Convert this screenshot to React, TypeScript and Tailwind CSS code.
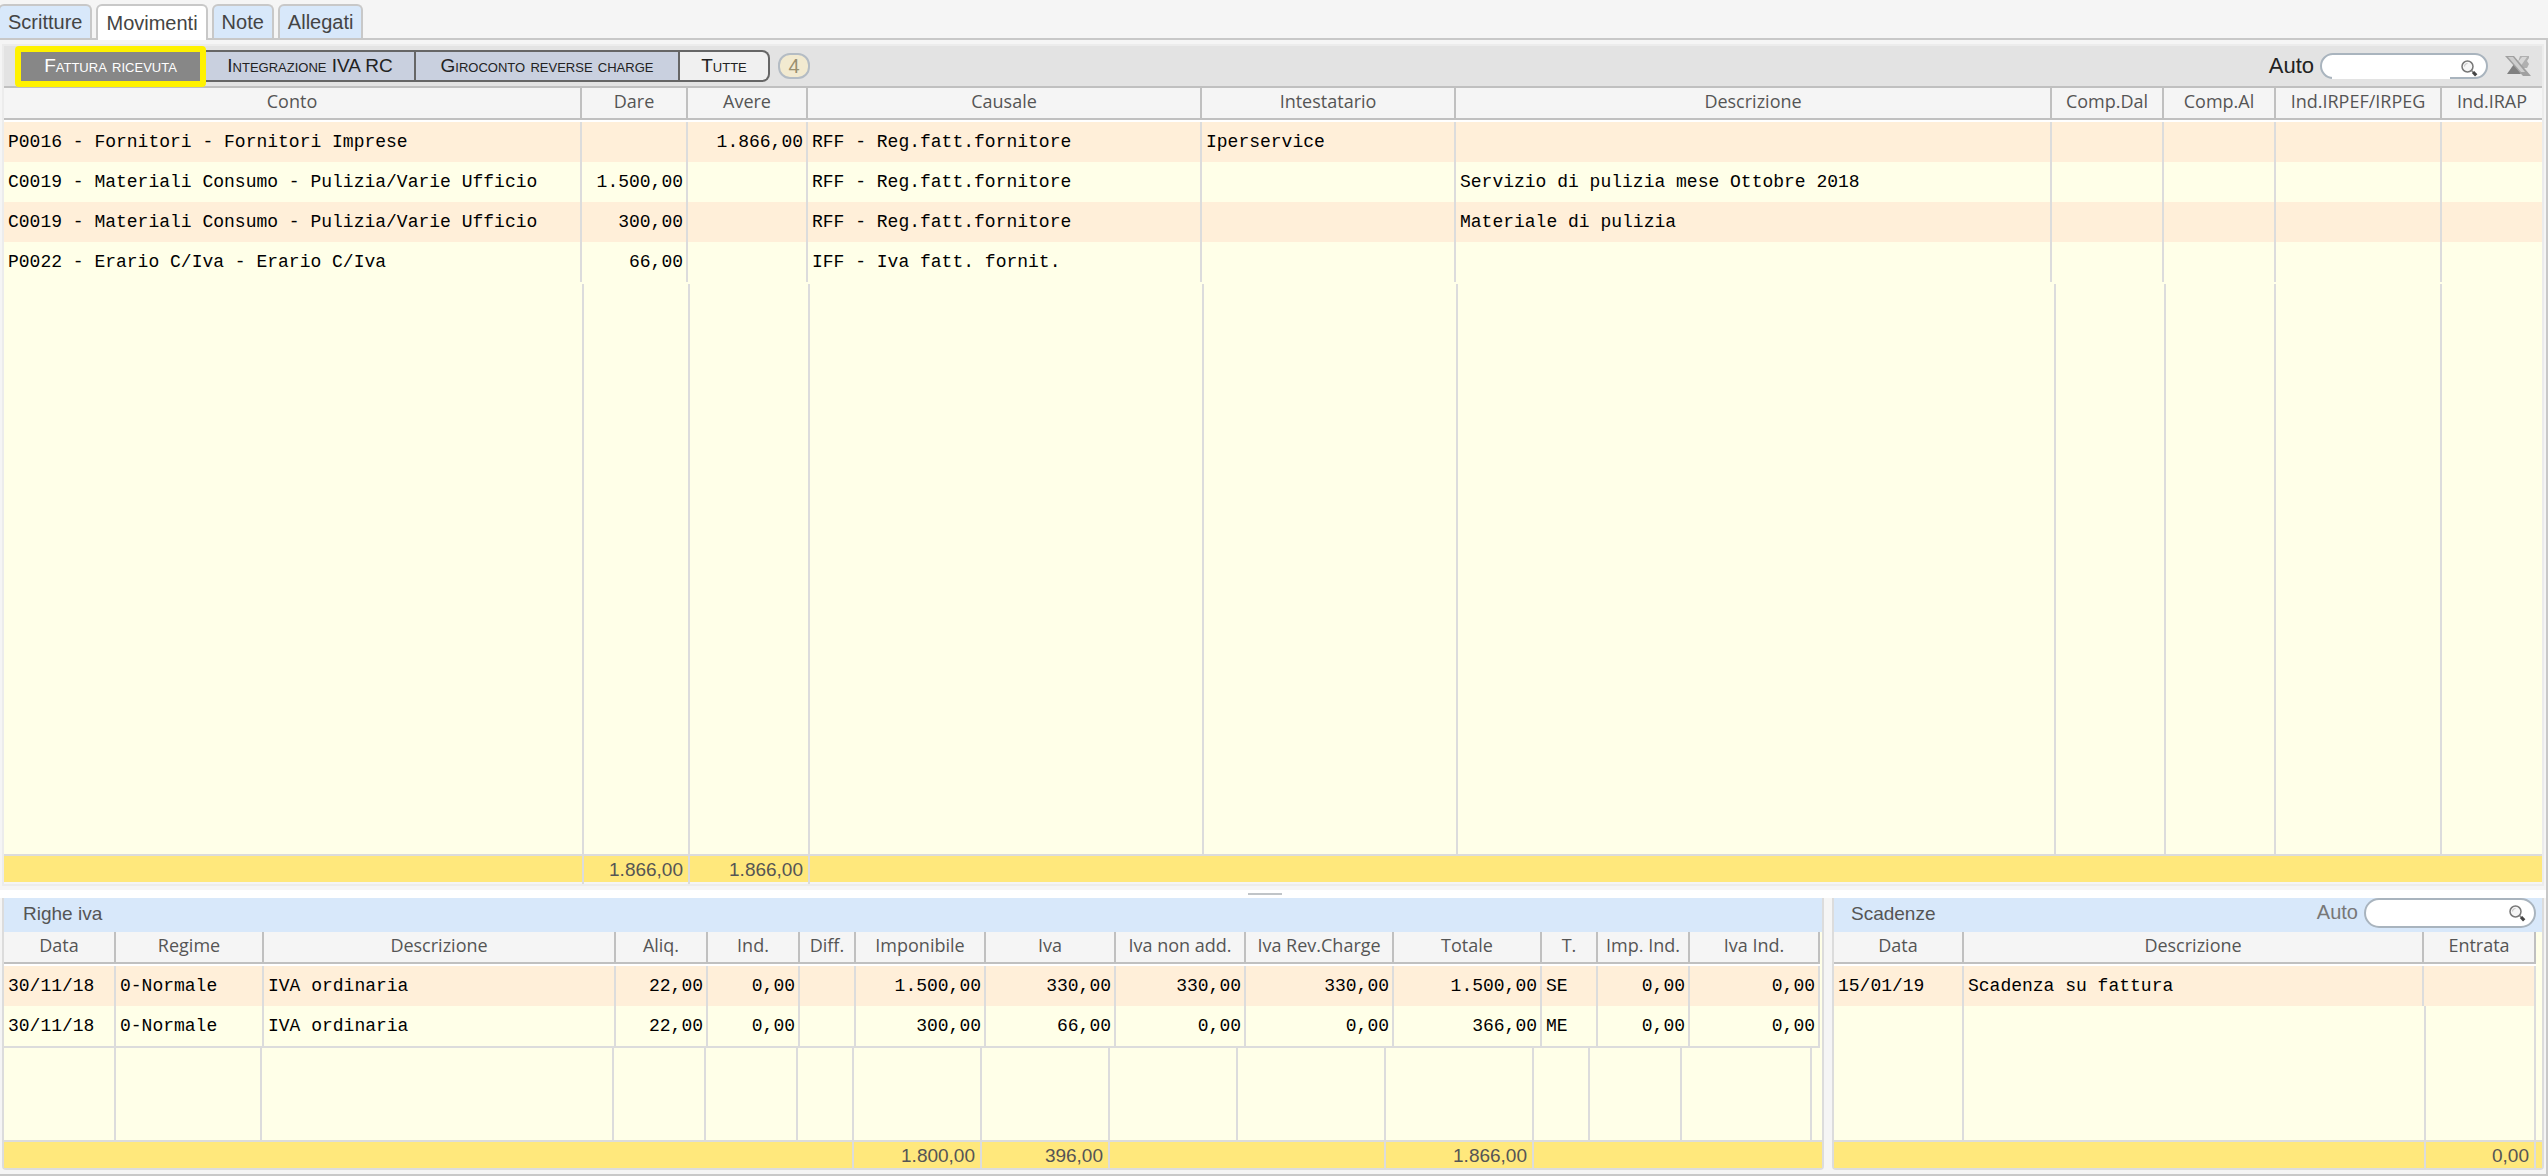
import React, { useState } from "react";
import { clsx } from "clsx";

type Align = "left" | "right";

interface Column {
  label: string;
  // undefined width = takes the remaining space
  width?: number;
  fillWidth?: number;
  align?: Align;
  total?: string;
}

const MOVIMENTI_COLUMNS: Column[] = [
  { label: "Conto", width: 578, fillWidth: 580 },
  { label: "Dare", width: 106, align: "right", total: "1.866,00" },
  { label: "Avere", width: 120, align: "right", total: "1.866,00" },
  { label: "Causale", width: 394 },
  { label: "Intestatario", width: 254 },
  { label: "Descrizione" },
  { label: "Comp.Dal", width: 112, fillWidth: 110 },
  { label: "Comp.Al", width: 112, fillWidth: 110 },
  { label: "Ind.IRPEF/IRPEG", width: 166 },
  { label: "Ind.IRAP", width: 100 },
];

const MOVIMENTI_ROWS = [
  ["P0016 - Fornitori - Fornitori Imprese", "", "1.866,00", "RFF - Reg.fatt.fornitore", "Iperservice", "", "", "", "", ""],
  ["C0019 - Materiali Consumo - Pulizia/Varie Ufficio", "1.500,00", "", "RFF - Reg.fatt.fornitore", "", "Servizio di pulizia mese Ottobre 2018", "", "", "", ""],
  ["C0019 - Materiali Consumo - Pulizia/Varie Ufficio", "300,00", "", "RFF - Reg.fatt.fornitore", "", "Materiale di pulizia", "", "", "", ""],
  ["P0022 - Erario C/Iva - Erario C/Iva", "66,00", "", "IFF - Iva fatt. fornit.", "", "", "", "", "", ""],
];

const IVA_COLUMNS: Column[] = [
  { label: "Data", width: 112 },
  { label: "Regime", width: 148, fillWidth: 146 },
  { label: "Descrizione" },
  { label: "Aliq.", width: 92, align: "right" },
  { label: "Ind.", width: 92, align: "right" },
  { label: "Diff.", width: 56 },
  { label: "Imponibile", width: 130, fillWidth: 128, align: "right", total: "1.800,00" },
  { label: "Iva", width: 130, fillWidth: 128, align: "right", total: "396,00" },
  { label: "Iva non add.", width: 130, fillWidth: 128, align: "right" },
  { label: "Iva Rev.Charge", width: 148, align: "right" },
  { label: "Totale", width: 148, align: "right", total: "1.866,00" },
  { label: "T.", width: 56 },
  { label: "Imp. Ind.", width: 92, align: "right" },
  { label: "Iva Ind.", width: 130, align: "right" },
];

const IVA_ROWS = [
  ["30/11/18", "0-Normale", "IVA ordinaria", "22,00", "0,00", "", "1.500,00", "330,00", "330,00", "330,00", "1.500,00", "SE", "0,00", "0,00"],
  ["30/11/18", "0-Normale", "IVA ordinaria", "22,00", "0,00", "", "300,00", "66,00", "0,00", "0,00", "366,00", "ME", "0,00", "0,00"],
];

const SCADENZE_COLUMNS: Column[] = [
  { label: "Data", width: 130 },
  { label: "Descrizione" },
  { label: "Entrata", width: 112, fillWidth: 110, align: "right", total: "0,00" },
];

const SCADENZE_ROWS = [["15/01/19", "Scadenza su fattura", ""]];

const TABS = ["Scritture", "Movimenti", "Note", "Allegati"];

interface DataGridProps {
  columns: Column[];
  rows: string[][];
  // space left at the right of the last column
  endClass?: string;
  fillEndClass?: string;
  closeRows?: boolean;
  gapAfterRows?: boolean;
  lastBorder?: boolean;
}

function DataGrid({
  columns,
  rows,
  endClass,
  fillEndClass,
  closeRows,
  gapAfterRows,
  lastBorder,
}: DataGridProps) {
  const hasBorder = (index: number) => lastBorder || index < columns.length - 1;
  const hasTotalBorder = (index: number) =>
    Boolean(columns[index].total || columns[index + 1]?.total);
  const template = columns
    .map((c) => (c.width ? `${c.fillWidth ?? c.width}px` : "minmax(0,1fr)"))
    .join(" ");

  return (
    <div className="flex flex-1 flex-col bg-[#ffffe8]">
      <div className={endClass}>
        <table className="w-full table-fixed border-separate border-spacing-0">
          <colgroup>
            {columns.map((c, i) => (
              <col key={i} style={{ width: c.width }} />
            ))}
          </colgroup>
          <thead className="bg-[#f5f5f5] font-['Open_Sans','Noto_Sans',sans-serif] text-[18px] leading-6">
            <tr>
              {columns.map((c, i) => (
                <th
                  key={i}
                  scope="col"
                  className={clsx(
                    "h-8 overflow-hidden border-b-2 border-[#c0c0c0] p-0 pb-1 text-center font-normal whitespace-nowrap text-[#555]",
                    hasBorder(i) && "border-r-2"
                  )}
                >
                  {c.label}
                </th>
              ))}
            </tr>
          </thead>
          <tbody className="font-['Liberation_Mono','Courier_New',monospace] text-[18px] leading-6 text-black">
            <tr aria-hidden="true">
              <td colSpan={columns.length} className="h-0.5 bg-white p-0" />
            </tr>
            {rows.map((row, r) => (
              <tr key={r} className={r % 2 === 0 ? "bg-[#ffefd9]" : "bg-[#ffffe8]"}>
                {row.map((value, i) => (
                  <td
                    key={i}
                    className={clsx(
                      "h-10 overflow-hidden py-0 whitespace-nowrap",
                      columns[i].align === "right" ? "pr-[3px] text-right" : "pl-1",
                      hasBorder(i) && "border-r-2 border-[#dcdcdc]"
                    )}
                  >
                    {value}
                  </td>
                ))}
              </tr>
            ))}
          </tbody>
        </table>
        {closeRows && <div className="h-0.5 bg-[#dcdcdc]" />}
      </div>

      {/* Empty area under the rows */}
      <div
        className={clsx("grid flex-1", fillEndClass, gapAfterRows && "mt-0.5")}
        style={{ gridTemplateColumns: template }}
      >
        {columns.map((_, i) => (
          <div key={i} className={clsx(hasBorder(i) && "border-r-2 border-[#dcdcdc]")} />
        ))}
      </div>

      {/* Totals */}
      <div className="border-t-2 border-[#dcdcdc] bg-[#ffe87c]">
        <div
          className={clsx("grid h-[26px]", fillEndClass)}
          style={{ gridTemplateColumns: template }}
        >
          {columns.map((c, i) => (
            <div
              key={i}
              className={clsx(
                "pr-[5px] text-right text-[19px] leading-7 text-[#555]",
                hasTotalBorder(i) && "border-r-2 border-[#dcdcdc]"
              )}
            >
              {c.total}
            </div>
          ))}
        </div>
      </div>
    </div>
  );
}

function MagnifierIcon() {
  return (
    <svg viewBox="0 0 18 18" className="h-[18px] w-[18px]" aria-hidden="true">
      <circle cx="7.5" cy="7.5" r="5.5" fill="#f6f6f6" stroke="#777" strokeWidth="1.5" />
      <path d="M4.5 7.5a3 3 0 0 1 3-3" fill="none" stroke="#c8c8c8" strokeWidth="1.2" />
      <path d="M11.5 11.5l1.5 1.5" stroke="#888" strokeWidth="1.6" />
      <path d="M13 13l3.2 3.4" stroke="#444" strokeWidth="3.2" />
    </svg>
  );
}

function SpreadsheetIcon() {
  return (
    <svg viewBox="0 0 28 22" className="h-[22px] w-7" aria-hidden="true">
      <path d="M16 1h9v2l-2 3 2 3-2 4h-5l-4-6z" fill="#b0b0b0" />
      <path d="M18 2h5l-7 10-3-4z" fill="#d6d6d6" />
      <path d="M3 19l7-10 7 10z" fill="#808080" />
      <path d="M1 1h9l17 20h-8z" fill="#a0a0a0" />
      <path d="M4 2h5l12 15h-4z" fill="#cecece" />
    </svg>
  );
}

export default function App() {
  const [activeTab, setActiveTab] = useState("Movimenti");
  const [filter, setFilter] = useState("Fattura ricevuta");

  return (
    <div className="flex min-h-screen flex-col bg-[#f5f5f5] font-['Liberation_Sans',Arial,sans-serif]">
      {/* Tabs */}
      <nav className="-ml-0.5 flex gap-1 border-b-2 border-[#c8c8c8] pt-1">
        {TABS.map((tab) => (
          <button
            key={tab}
            type="button"
            onClick={() => setActiveTab(tab)}
            className={clsx(
              "rounded-t-md border-2 border-b-0 border-[#c8c8c8] px-2 text-[20px] text-[#444]",
              tab === activeTab ? "-mb-0.5 h-9 bg-white" : "h-[34px] bg-[#d8e8fa]"
            )}
          >
            {tab}
          </button>
        ))}
      </nav>

      <main className="flex flex-1 flex-col border-r-2 border-b-2 border-[#c8c8c8] pt-1 pb-1">
        {/* Movimenti */}
        <section className="mx-0.5 flex flex-1 flex-col border-2 border-[#ececec] pb-0.5">
          <div className="flex h-[42px] items-center border-b-2 border-[#c0c0c0] bg-[#e3e3e3] pr-2.5 pl-[11px]">
            <div className="flex items-center text-[19px] [font-variant:small-caps]">
              <button
                type="button"
                aria-pressed={filter === "Fattura ricevuta"}
                onClick={() => setFilter("Fattura ricevuta")}
                className="h-[41px] w-[191px] rounded-sm border-[6px] border-[#fff200] bg-[#878787] text-white"
              >
                Fattura ricevuta
              </button>
              <button
                type="button"
                aria-pressed={filter === "Integrazione IVA RC"}
                onClick={() => setFilter("Integrazione IVA RC")}
                className="h-8 w-[210px] border-y-2 border-r-2 border-[#666] bg-[#c9d0df] text-[#222]"
              >
                Integrazione IVA RC
              </button>
              <button
                type="button"
                aria-pressed={filter === "Giroconto reverse charge"}
                onClick={() => setFilter("Giroconto reverse charge")}
                className="h-8 w-[264px] border-y-2 border-r-2 border-[#666] bg-[#c9d0df] text-[#222]"
              >
                Giroconto reverse charge
              </button>
              <button
                type="button"
                aria-pressed={filter === "Tutte"}
                onClick={() => setFilter("Tutte")}
                className="h-8 w-[90px] rounded-r-lg border-2 border-l-0 border-[#666] bg-[#f0f0f0] text-[#222]"
              >
                Tutte
              </button>
            </div>
            <span className="ml-2 flex h-[26px] w-8 items-center justify-center rounded-xl border-2 border-[#b4bcc4] bg-[#f2ead0] text-[20px] text-[#999070]">
              4
            </span>
            <label htmlFor="search-movimenti" className="ml-auto text-[22px] leading-7 text-[#222]">
              Auto
            </label>
            <div className="ml-1.5 flex h-[26px] w-[168px] items-end justify-between rounded-full border-2 border-[#a9b4be] bg-white pr-2 pl-2.5">
              <input
                id="search-movimenti"
                type="text"
                className="-mb-0.5 h-6 w-[118px] bg-white text-base outline-none"
              />
              <MagnifierIcon />
            </div>
            <button type="button" aria-label="Esporta" className="ml-4">
              <SpreadsheetIcon />
            </button>
          </div>
          <DataGrid columns={MOVIMENTI_COLUMNS} rows={MOVIMENTI_ROWS} gapAfterRows />
        </section>

        {/* Splitter */}
        <div className="mt-1 flex h-2 items-center justify-center bg-white pr-4">
          <div className="h-0.5 w-[34px] bg-[#c0c4c8]" />
        </div>

        <div className="mx-0.5 grid h-[272px] grid-cols-[1822fr_712fr] gap-2">
          <section className="flex min-w-0 flex-col rounded-b border-2 border-t-0 border-[#dcdcdc]">
            <h2 className="h-[34px] bg-[#d8e8fa] pl-[19px] text-[19px] leading-8 text-[#555]">Righe iva</h2>
            <DataGrid
              columns={IVA_COLUMNS}
              rows={IVA_ROWS}
              endClass="mr-0.5"
              fillEndClass="mr-2.5"
              closeRows
              lastBorder
            />
          </section>
          <section className="flex min-w-0 flex-col rounded-b border-2 border-t-0 border-[#dcdcdc]">
            <div className="flex h-[34px] items-start bg-[#d8e8fa] pr-1.5 pl-[17px]">
              <h2 className="text-[19px] leading-8 text-[#555]">Scadenze</h2>
              <label htmlFor="search-scadenze" className="ml-auto text-[20px] leading-7 text-[#777]">
                Auto
              </label>
              <div className="ml-1.5 flex h-[30px] w-[172px] items-center rounded-full border-2 border-[#a9b4be] bg-white pr-2">
                <input
                  id="search-scadenze"
                  type="text"
                  className="min-w-0 flex-1 px-3 text-base outline-none"
                />
                <MagnifierIcon />
              </div>
            </div>
            <DataGrid
              columns={SCADENZE_COLUMNS}
              rows={SCADENZE_ROWS}
              endClass="mr-1.5"
              fillEndClass="mr-1.5"
              lastBorder
            />
          </section>
        </div>
      </main>
    </div>
  );
}
